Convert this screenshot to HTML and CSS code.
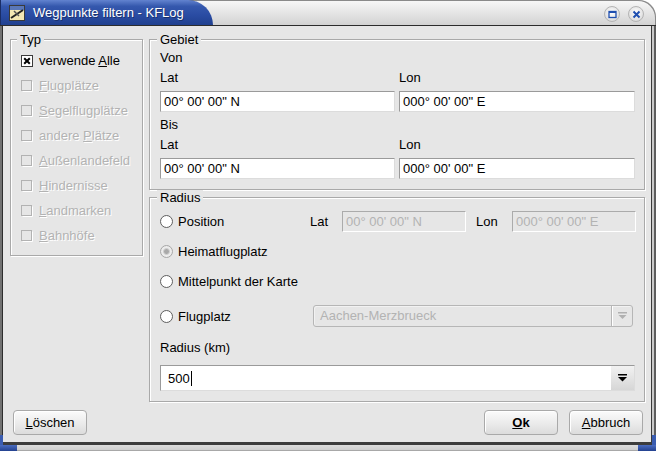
FILE: index.html
```html
<!DOCTYPE html>
<html>
<head>
<meta charset="utf-8">
<title>Wegpunkte filtern - KFLog</title>
<link rel="stylesheet" href="styles.css">
</head>
<body>
<div class="window">
  <div class="titlebar">
    <div class="tab">
      <svg class="app-icon" width="16" height="16" viewBox="0 0 16 16">
        <rect x="0.5" y="0.5" width="15" height="15" fill="#f3e7b4" stroke="#3a3a3a"/>
        <rect x="1" y="1" width="14" height="4" fill="#5a77b8"/>
        <path d="M2 13 L14 5" stroke="#222" stroke-width="2"/>
        <path d="M5 6 L10 11" stroke="#555" stroke-width="1.5"/>
      </svg>
      <span class="title">Wegpunkte filtern - KFLog</span>
    </div>
    <div class="title-buttons">
      <span class="tbtn">
        <svg width="9" height="9" viewBox="0 0 9 9"><rect x="1" y="1.5" width="7" height="6" fill="none" stroke="#1f4fb0" stroke-width="1.3"/><rect x="1" y="1" width="7" height="2" fill="#1f4fb0"/></svg>
      </span>
      <span class="tbtn">
        <svg width="9" height="9" viewBox="0 0 9 9"><path d="M1.5 1.5 L7.5 7.5 M7.5 1.5 L1.5 7.5" stroke="#1f4fb0" stroke-width="2"/></svg>
      </span>
    </div>
  </div>

  <div class="frame">
    <div class="content">
      <div class="columns">
        <div class="group typ">
          <div class="gtitle">Typ</div>
          <div class="checklist">
            <div class="check">
              <svg class="cb" width="12" height="12" viewBox="0 0 12 12"><rect x="0.5" y="0.5" width="11" height="11" fill="#fff" stroke="#3a3a3a"/><path d="M3.2 3.2 L8.8 8.8 M8.8 3.2 L3.2 8.8" stroke="#000" stroke-width="2"/></svg>
              <span>verwende <u>A</u>lle</span>
            </div>
            <div class="check dis">
              <svg class="cb" width="12" height="12" viewBox="0 0 12 12"><rect x="0.5" y="0.5" width="10" height="10" fill="none" stroke="#b2b2b2"/><path d="M1.5 11.5 H11.5 V1.5" fill="none" stroke="#fff"/></svg>
              <span><u>F</u>lugplätze</span>
            </div>
            <div class="check dis">
              <svg class="cb" width="12" height="12" viewBox="0 0 12 12"><rect x="0.5" y="0.5" width="10" height="10" fill="none" stroke="#b2b2b2"/><path d="M1.5 11.5 H11.5 V1.5" fill="none" stroke="#fff"/></svg>
              <span><u>S</u>egelflugplätze</span>
            </div>
            <div class="check dis">
              <svg class="cb" width="12" height="12" viewBox="0 0 12 12"><rect x="0.5" y="0.5" width="10" height="10" fill="none" stroke="#b2b2b2"/><path d="M1.5 11.5 H11.5 V1.5" fill="none" stroke="#fff"/></svg>
              <span>andere <u>P</u>lätze</span>
            </div>
            <div class="check dis">
              <svg class="cb" width="12" height="12" viewBox="0 0 12 12"><rect x="0.5" y="0.5" width="10" height="10" fill="none" stroke="#b2b2b2"/><path d="M1.5 11.5 H11.5 V1.5" fill="none" stroke="#fff"/></svg>
              <span><u>A</u>ußenlandefeld</span>
            </div>
            <div class="check dis">
              <svg class="cb" width="12" height="12" viewBox="0 0 12 12"><rect x="0.5" y="0.5" width="10" height="10" fill="none" stroke="#b2b2b2"/><path d="M1.5 11.5 H11.5 V1.5" fill="none" stroke="#fff"/></svg>
              <span><u>H</u>indernisse</span>
            </div>
            <div class="check dis">
              <svg class="cb" width="12" height="12" viewBox="0 0 12 12"><rect x="0.5" y="0.5" width="10" height="10" fill="none" stroke="#b2b2b2"/><path d="M1.5 11.5 H11.5 V1.5" fill="none" stroke="#fff"/></svg>
              <span><u>L</u>andmarken</span>
            </div>
            <div class="check dis">
              <svg class="cb" width="12" height="12" viewBox="0 0 12 12"><rect x="0.5" y="0.5" width="10" height="10" fill="none" stroke="#b2b2b2"/><path d="M1.5 11.5 H11.5 V1.5" fill="none" stroke="#fff"/></svg>
              <span><u>B</u>ahnhöfe</span>
            </div>
          </div>
        </div>

        <div class="right">
          <div class="group gebiet">
            <div class="gtitle">Gebiet</div>
            <div class="gbody">
              <div class="lbl von">Von</div>
              <div class="coords">
                <div class="lbl">Lat</div>
                <div class="lbl">Lon</div>
                <div class="input">00° 00' 00" N</div>
                <div class="input">000° 00' 00" E</div>
              </div>
              <div class="lbl bis">Bis</div>
              <div class="coords">
                <div class="lbl">Lat</div>
                <div class="lbl">Lon</div>
                <div class="input">00° 00' 00" N</div>
                <div class="input">000° 00' 00" E</div>
              </div>
            </div>
          </div>

          <div class="group radius">
            <div class="gtitle">Radius</div>
            <div class="rbody">
              <div class="pos-row">
                <div class="radio">
                  <svg class="rb" width="13" height="13" viewBox="0 0 13 13"><circle cx="6.5" cy="6.5" r="6" fill="#fff" stroke="#5e5e5e"/></svg>
                  <span>Position</span>
                </div>
                <div class="plbl">Lat</div>
                <div class="input disabled">00° 00' 00" N</div>
                <div class="plbl lon">Lon</div>
                <div class="input disabled">000° 00' 00" E</div>
              </div>
              <div class="radio row-gap">
                <svg class="rb" width="13" height="13" viewBox="0 0 13 13"><circle cx="6.5" cy="6.5" r="6" fill="#ececec" stroke="#a6a6a6"/><circle cx="6.5" cy="6.5" r="3" fill="#a9a9a9" stroke="#d2d2d2" stroke-width="1"/></svg>
                <span>Heimatflugplatz</span>
              </div>
              <div class="radio row-gap">
                <svg class="rb" width="13" height="13" viewBox="0 0 13 13"><circle cx="6.5" cy="6.5" r="6" fill="#fff" stroke="#5e5e5e"/></svg>
                <span>Mittelpunkt der Karte</span>
              </div>
              <div class="flug-row">
                <div class="radio">
                  <svg class="rb" width="13" height="13" viewBox="0 0 13 13"><circle cx="6.5" cy="6.5" r="6" fill="#fff" stroke="#5e5e5e"/></svg>
                  <span>Flugplatz</span>
                </div>
                <div class="combo-dis">
                  <span class="combo-text">Aachen-Merzbrueck</span>
                  <span class="combo-arrow">
                    <svg width="9" height="8" viewBox="0 0 9 8"><rect x="0" y="0" width="9" height="1.5" fill="#b0b0b0"/><path d="M0.5 3 H8.5 L4.5 7 Z" fill="#b0b0b0"/></svg>
                  </span>
                </div>
              </div>
              <div class="lbl rad-lbl">Radius (km)</div>
              <div class="combo-edit">
                <div class="combo-field"><span>500</span><span class="caret"></span></div>
                <div class="combo-btn">
                  <svg width="9" height="8" viewBox="0 0 9 8"><rect x="0" y="0" width="9" height="1.5" fill="#000"/><path d="M0 3 H9 L4.5 7.5 Z" fill="#000"/></svg>
                </div>
              </div>
            </div>
          </div>
        </div>
      </div>

      <div class="buttons">
        <button class="btn"><u>L</u>öschen</button>
        <span class="spacer"></span>
        <button class="btn ok"><u>O</u>k</button>
        <button class="btn"><u>A</u>bbruch</button>
      </div>
    </div>
  </div>

  <div class="bottom-frame"></div>
  <span class="corner corner-l"></span>
  <span class="corner corner-r"></span>
</div>
</body>
</html>
```

FILE: styles.css
```css
* { box-sizing: border-box; }

html, body {
  margin: 0;
  padding: 0;
  background: #ffffff;
}

body {
  font-family: "Liberation Sans", Arial, sans-serif;
  font-size: 13px;
  color: #000;
}

.window {
  position: relative;
  width: 656px;
  height: 451px;
  overflow: hidden;
}

/* ---------- title bar ---------- */
.titlebar {
  height: 26px;
  display: flex;
  justify-content: space-between;
  background: linear-gradient(#f8f8f8, #dedede 70%, #d2d2d2);
  border-top-right-radius: 17px;
  border-bottom: 1px solid #2c2c2c;
  box-shadow: inset -1px 1px 0 #8a8a8a;
}

.tab {
  width: 213px;
  height: 25px;
  display: flex;
  align-items: center;
  background: linear-gradient(#6283cf, #3558ad 25%, #2a4ca3 60%, #20408f);
  border-top-right-radius: 25px 25px;
  box-shadow: inset 1px 0 0 #1a2d66;
}

.app-icon {
  margin-left: 9px;
  flex: none;
}

.title {
  margin-left: 8px;
  color: #ffffff;
  font-size: 13px;
  white-space: nowrap;
  text-shadow: 1px 1px 0 rgba(0, 0, 0, 0.35);
}

.title-buttons {
  display: flex;
  gap: 8px;
  padding: 6px 12px 0 0;
}

.tbtn {
  width: 16px;
  height: 16px;
  border-radius: 50%;
  border: 1px solid #b4b4b4;
  background: radial-gradient(circle at 50% 40%, #ffffff, #e4e4e4 60%, #c8c8c8);
  display: flex;
  align-items: center;
  justify-content: center;
}

/* ---------- frame ---------- */
.frame {
  padding: 0 5px 0 3px;
  background:
    linear-gradient(to right, #727272 0 2px, #2e2e2e 2px 3px, transparent 3px),
    linear-gradient(to left, #5e5e5e 0 2px, #cacaca 2px 4px, #3a3a3a 4px 5px, transparent 5px);
}

.content {
  height: 416px;
  padding: 13px 6px 7px 7px;
  background: #e6e6e6;
  display: flex;
  flex-direction: column;
}

.bottom-frame {
  height: 9px;
  background: linear-gradient(#3c3c3c 0 3px, #dcdcdc 3px, #cfcfcf 8px, #a8a8a8 8px);
}

.corner {
  position: absolute;
  bottom: 0;
  background: linear-gradient(#4a6cc0, #23418f);
}

.corner-l {
  left: 0;
  width: 17px;
  height: 6px;
  box-shadow: 0 -10px 0 -0px transparent;
}

.corner-l::before,
.corner-r::before {
  content: "";
  position: absolute;
  bottom: 6px;
  width: 3px;
  height: 10px;
  background: #3a5cb0;
}

.corner-l::before { left: 0; }

.corner-r {
  right: 0;
  width: 18px;
  height: 6px;
}

.corner-r::before { right: 0; width: 4px; }

/* ---------- group boxes ---------- */
.columns {
  display: flex;
  gap: 6px;
  align-items: flex-start;
}

.group {
  border: 1px solid #a9a9a9;
  box-shadow: inset 1px 1px 0 #ffffff, 1px 1px 0 #ffffff;
}

.gtitle {
  width: fit-content;
  height: 15px;
  line-height: 15px;
  margin: -8px 0 0 6px;
  padding: 0 3px;
  background: #e6e6e6;
}

.gebiet .gtitle,
.radius .gtitle { margin-left: 7px; }

.typ {
  width: 133px;
  height: 217px;
}

.checklist {
  margin-top: 1px;
  padding-left: 10px;
}

.check {
  height: 25px;
  display: flex;
  align-items: center;
  gap: 6px;
  white-space: nowrap;
}

.cb { flex: none; }

.dis {
  color: #b3b3b3;
  text-shadow: 1px 1px 0 #ffffff;
}

.right {
  width: 496px;
  display: flex;
  flex-direction: column;
  gap: 7px;
}

.gebiet { height: 151px; }
.radius { height: 205px; }

.gbody {
  padding: 0 9px 0 10px;
}

.lbl {
  height: 16px;
  line-height: 16px;
}

.von { margin-top: 3px; }
.bis { margin-top: 5px; }

.coords {
  display: grid;
  grid-template-columns: 235px 236px;
  column-gap: 4px;
  row-gap: 5px;
  margin-top: 4px;
}

.input {
  height: 21px;
  line-height: 19px;
  padding-left: 3px;
  background: #ffffff;
  border: 1px solid;
  border-color: #9a9a9a #dcdcdc #dcdcdc #9a9a9a;
  white-space: nowrap;
  overflow: hidden;
}

.input.disabled {
  background: #e6e6e6;
  color: #b3b3b3;
  border-color: #ababab #ffffff #ffffff #ababab;
}

/* ---------- radius group ---------- */
.rbody {
  padding: 0 8px 0 10px;
}

.radio {
  height: 21px;
  display: flex;
  align-items: center;
  gap: 5px;
  white-space: nowrap;
}

.rb { flex: none; }

.row-gap { margin-top: 9px; }

.pos-row {
  margin-top: 6px;
  display: grid;
  grid-template-columns: 150px 32px 124px 46px 124px;
  align-items: center;
}

.plbl { line-height: 21px; }
.plbl.lon { padding-left: 10px; }

.flug-row {
  margin-top: 13px;
  display: grid;
  grid-template-columns: 153px 320px;
  align-items: center;
}

.flug-row .radio { height: 22px; }

.combo-dis {
  height: 22px;
  display: flex;
  border: 1px solid #b6b6b6;
  border-radius: 3px;
  background: #e6e6e6;
  box-shadow: inset 1px 1px 0 #f2f2f2;
}

.combo-text {
  flex: 1;
  padding-left: 6px;
  line-height: 20px;
  color: #b3b3b3;
}

.combo-arrow {
  width: 21px;
  display: flex;
  align-items: center;
  justify-content: center;
  border-left: 1px solid #b6b6b6;
  box-shadow: inset 1px 0 0 #ffffff;
}

.rad-lbl { margin-top: 13px; }

.combo-edit {
  margin-top: 9px;
  width: 475px;
  height: 26px;
  display: flex;
  border: 1px solid;
  border-color: #9a9a9a #dcdcdc #dcdcdc #9a9a9a;
  background: #ffffff;
}

.combo-field {
  flex: 1;
  display: flex;
  align-items: center;
  padding-left: 7px;
}

.caret {
  display: inline-block;
  width: 1px;
  height: 15px;
  margin-left: 1px;
  background: #000;
}

.combo-btn {
  width: 23px;
  display: flex;
  align-items: center;
  justify-content: center;
  background: linear-gradient(#f2f2f2, #d6d6d6);
}

/* ---------- buttons ---------- */
.buttons {
  display: flex;
  gap: 11px;
  margin: 8px 2px 0 3px;
}

.spacer { flex: 1; }

.btn {
  width: 74px;
  height: 25px;
  padding: 0;
  font-family: "Liberation Sans", Arial, sans-serif;
  font-size: 13px;
  color: #000;
  border: 1px solid #a9a9a9;
  border-radius: 4px;
  background: linear-gradient(#fbfbfb, #ececec 50%, #dcdcdc);
  box-shadow: inset 1px 1px 0 #ffffff;
}

.btn.ok { font-weight: bold; }
```
